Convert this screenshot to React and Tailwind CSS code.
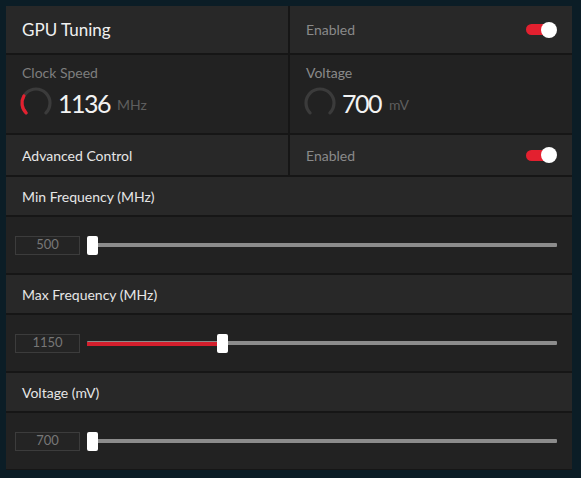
import React from "react";

const font = { fontFamily: "Lato, 'Noto Sans', sans-serif" };

function Toggle() {
  return (
    <div className="relative w-[31px] h-[16px] flex items-center">
      <div className="w-[26px] h-[11px] rounded-full bg-[#e3202f]" />
      <div className="absolute right-0 top-0 w-[16px] h-[16px] rounded-full bg-white" />
    </div>
  );
}

function Gauge({ red }) {
  return (
    <svg width="34" height="34" viewBox="0 0 34 34" fill="none">
      <path d="M7.1 26.9 A14 14 0 1 1 26.9 26.9" stroke="#3b3b3b" strokeWidth="3.2" strokeLinecap="round" />
      {red && (
        <path d="M7.1 26.9 A14 14 0 0 1 4.9 10" stroke="#e3202f" strokeWidth="3.2" strokeLinecap="round" />
      )}
    </svg>
  );
}

function SliderBlock({ title, value, pct }) {
  return (
    <>
      <div className="h-[38px] bg-[#282828] flex items-center pl-[16px] text-[14px] text-[#e6e6e6]">
        {title}
      </div>
      <div className="h-[56px] bg-[#222222] flex items-center pl-[9px] pr-[15px]">
        <div className="w-[65px] h-[19px] border border-[#3c3c3c] bg-[#242424] flex items-center justify-center text-[13px] text-[#777777]">
          {value}
        </div>
        <div className="relative flex-1 ml-[7px] h-[19px] flex items-center">
          <div className="w-full h-[4px] bg-[#8c8c8c] rounded-[1px]" />
          {pct > 0 && (
            <div className="absolute left-0 top-[8px] h-[4px] bg-[#d41f2d]" style={{ width: pct + "%" }} />
          )}
          <div
            className="absolute top-0 w-[11px] h-[19px] bg-white rounded-[2px]"
            style={{ left: `calc(${pct}% - ${pct > 0 ? 5 : 0}px)` }}
          />
        </div>
      </div>
    </>
  );
}

export default function App() {
  return (
    <div className="w-[581px] h-[478px] bg-[#0b1d26] p-[6px] pr-[9px]" style={font}>
      <div className="w-[566px] h-[464px] bg-[#161616] flex flex-col gap-[2px] overflow-hidden">
        <div className="grid grid-cols-2 gap-[2px]">
          <div className="h-[47px] bg-[#282828] flex items-center pl-[16px] text-[17px] text-[#f0f0f0]">GPU Tuning</div>
          <div className="h-[47px] bg-[#282828] flex items-center justify-between pl-[16px] pr-[15px] text-[14px] text-[#8a8a8a]">
            <span>Enabled</span>
            <Toggle />
          </div>
        </div>
        <div className="grid grid-cols-2 gap-[2px]">
          <div className="h-[78px] bg-[#222222] pl-[16px] pt-[10px]">
            <div className="text-[14px] text-[#7e7e7e] leading-[16px]">Clock Speed</div>
            <div className="flex items-center mt-[5px] -ml-[3px]">
              <Gauge red />
              <span className="ml-[5px] text-[25px] tracking-[-1.5px] text-[#f2f2f2] leading-none">1136</span>
              <span className="ml-[7px] text-[14px] text-[#5e5e5e] mt-[3px]">MHz</span>
            </div>
          </div>
          <div className="h-[78px] bg-[#222222] pl-[16px] pt-[10px]">
            <div className="text-[14px] text-[#8a8a8a] leading-[16px]">Voltage</div>
            <div className="flex items-center mt-[5px] -ml-[3px]">
              <Gauge />
              <span className="ml-[5px] text-[25px] tracking-[-1.5px] text-[#f2f2f2] leading-none">700</span>
              <span className="ml-[8px] text-[14px] text-[#5e5e5e] mt-[3px]">mV</span>
            </div>
          </div>
        </div>
        <div className="grid grid-cols-2 gap-[2px]">
          <div className="h-[40px] bg-[#282828] flex items-center pl-[16px] text-[14px] text-[#e6e6e6]">Advanced Control</div>
          <div className="h-[40px] bg-[#282828] flex items-center justify-between pl-[16px] pr-[15px] text-[14px] text-[#8a8a8a]">
            <span>Enabled</span>
            <Toggle />
          </div>
        </div>
        <SliderBlock title="Min Frequency (MHz)" value="500" pct={0} />
        <SliderBlock title="Max Frequency (MHz)" value="1150" pct={28.7} />
        <SliderBlock title="Voltage (mV)" value="700" pct={0} />
      </div>
    </div>
  );
}
